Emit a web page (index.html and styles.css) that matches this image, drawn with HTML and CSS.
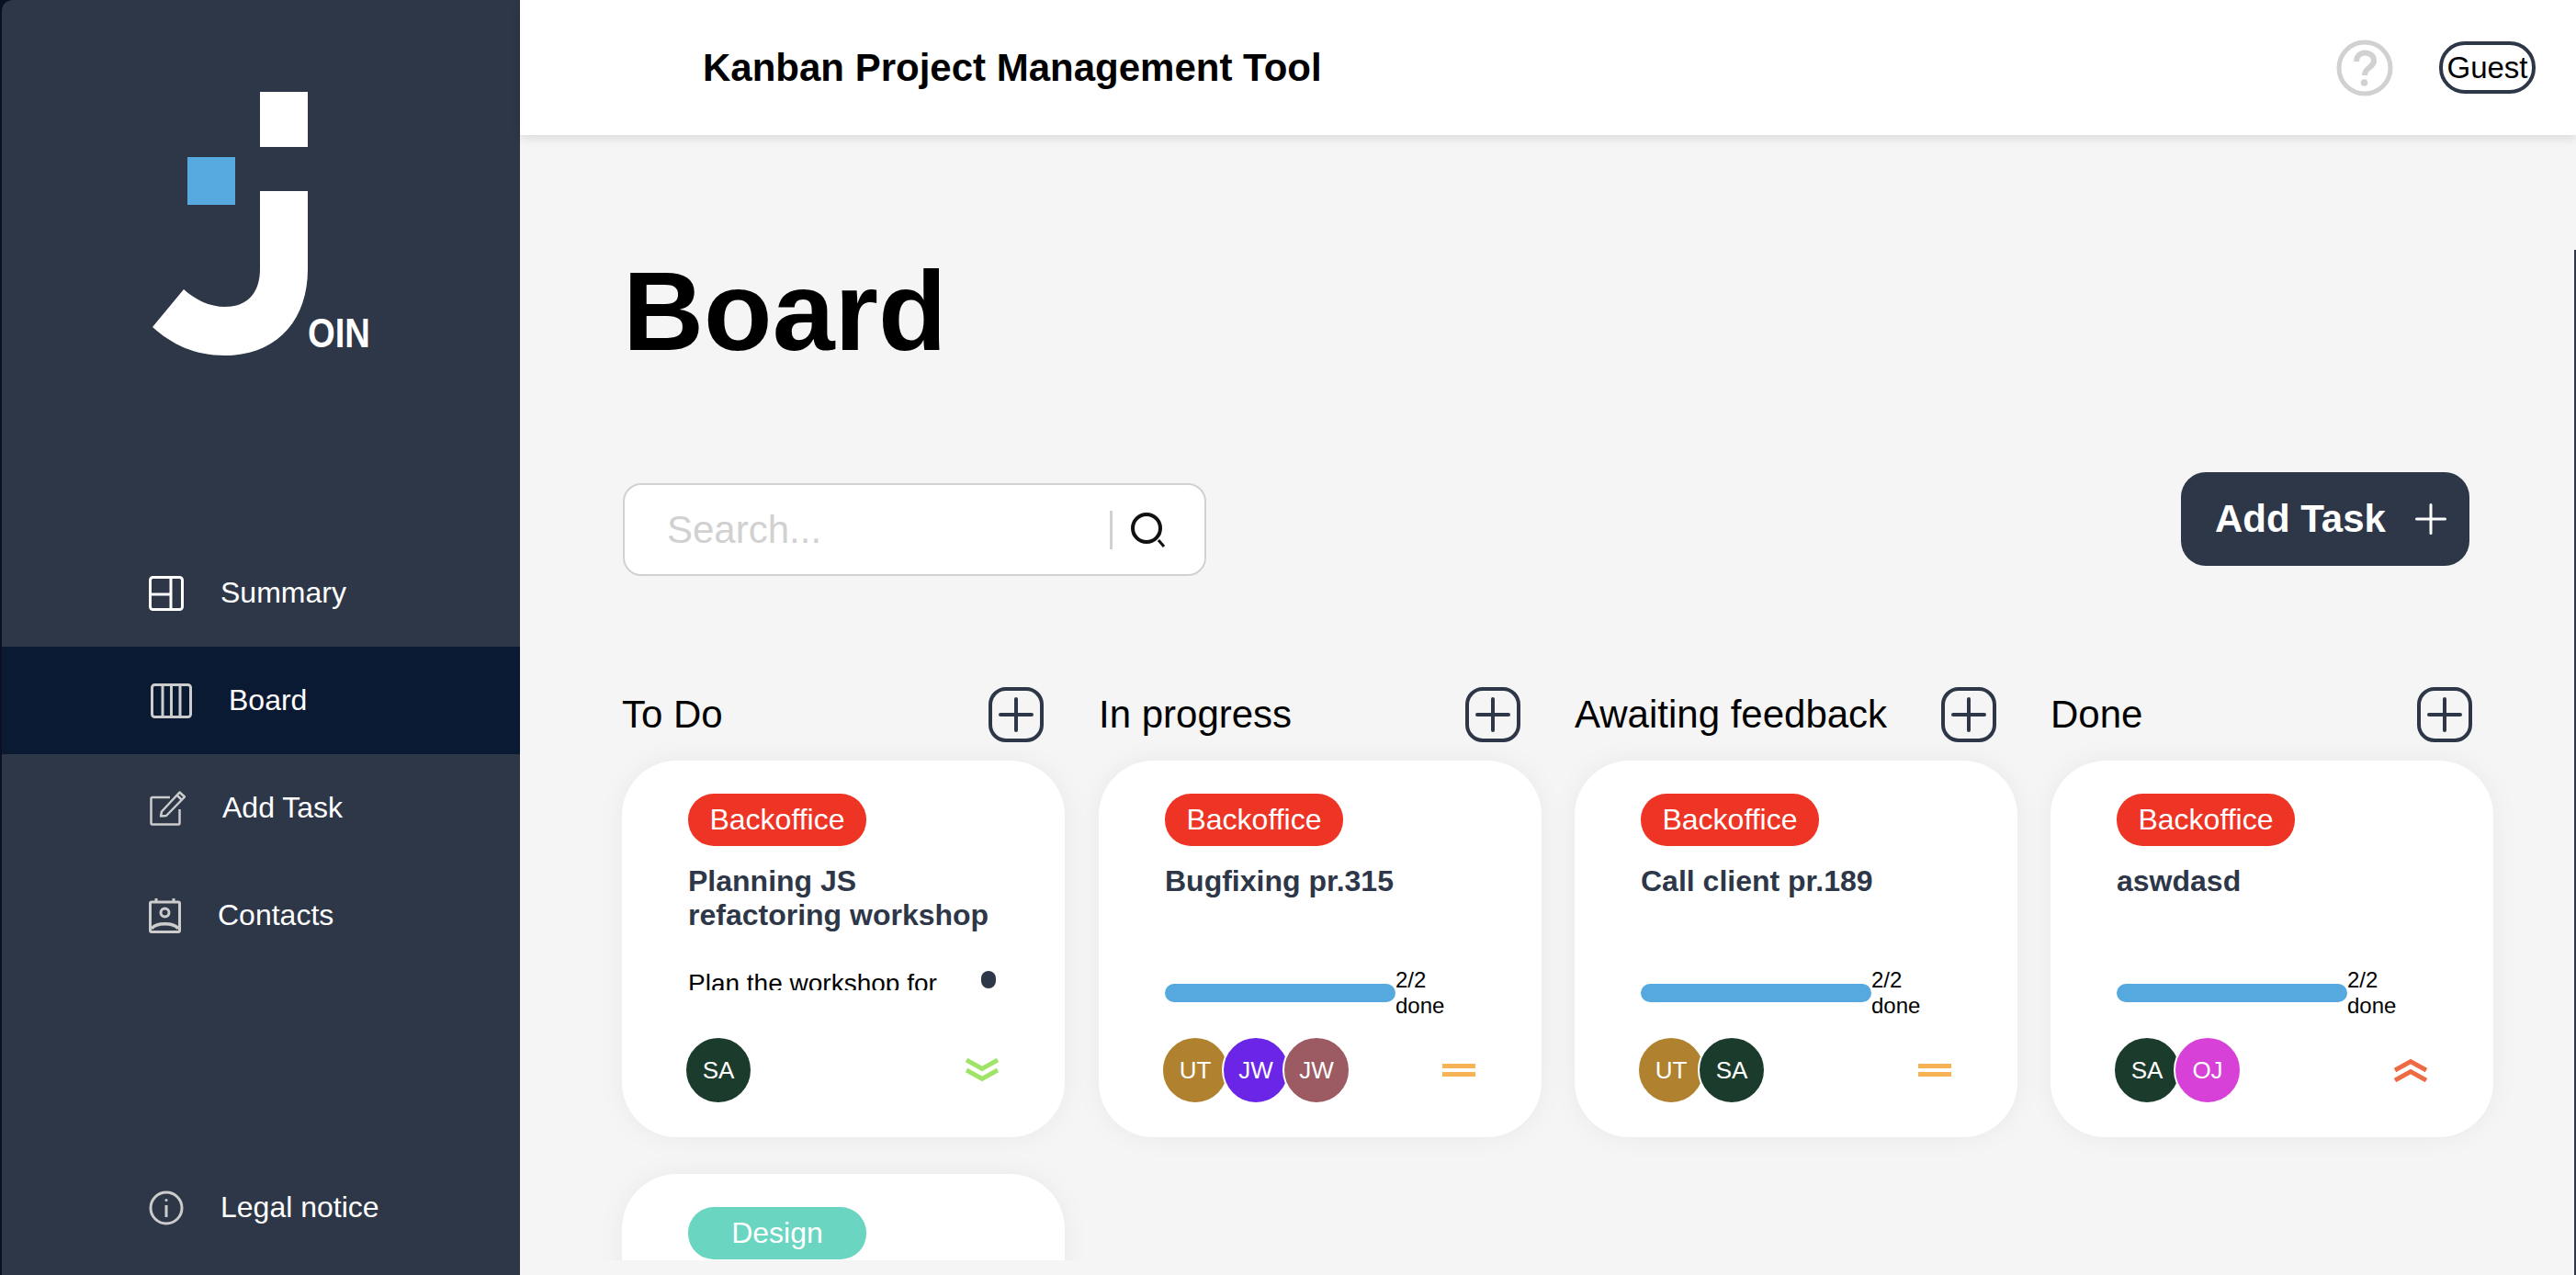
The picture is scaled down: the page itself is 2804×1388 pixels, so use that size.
FILE: index.html
```html
<!DOCTYPE html>
<html lang="en">
<head>
<meta charset="UTF-8">
<meta name="viewport" content="width=device-width, initial-scale=1.0">
<title>Join - Board</title>
<link rel="stylesheet" href="styles.css">
</head>
<body>
<aside class="sidebar">
    <svg class="logo" viewBox="160 95 250 295" width="250" height="295">
        <rect x="283" y="100" width="52" height="60" fill="#fff"/>
        <rect x="204" y="171" width="52" height="52" fill="#56a9df"/>
        <path d="M283 208H335V293C335 350 300 387 245 387C212 387 187 375 166 356L200 315C212 326 228 334 245 334C270 334 283 318 283 293Z" fill="#fff"/>
        <text class="logo-text" x="335" y="378" textLength="68" lengthAdjust="spacingAndGlyphs">OIN</text>
    </svg>
    <nav class="nav">
        <a class="nav-item">
            <svg width="38" height="38" viewBox="0 0 38 38" fill="none" stroke="#fff" stroke-width="3"><rect x="1.5" y="1.5" width="35" height="35" rx="3"/><path d="M24 2V36M2 20H24"/></svg>
            Summary
        </a>
        <a class="nav-item nav-item-board active">
            <svg width="45" height="38" viewBox="0 0 45 38" fill="none" stroke="#ccc" stroke-width="3"><rect x="1.5" y="1.5" width="42" height="35" rx="3"/><path d="M13 2V36M22.500 2V36M32 2V36"/></svg>
            Board
        </a>
        <a class="nav-item nav-item-task">
            <svg width="39" height="38" viewBox="0 0 39 38" fill="none" stroke="#ccc" stroke-width="2.500"><path d="M22 7H3A1.500 1.500 0 0 0 1.500 8.500V35A1.500 1.500 0 0 0 3 36.500H31A1.500 1.500 0 0 0 32.500 35V20"/><path d="M13 22.500L32.500 1.500L38 6.500L18 27L12 27.500Z" stroke-linejoin="round"/><path d="M29.500 4.500L35 10"/></svg>
            Add Task
        </a>
        <a class="nav-item">
            <svg width="35" height="38" viewBox="0 0 35 38" fill="none" stroke="#ccc" stroke-width="3"><rect x="1.500" y="4" width="32" height="32.500" rx="1.500"/><path d="M8 0V5M27 0V5"/><circle cx="17.500" cy="15.500" r="4.500"/><path d="M3 33C8 26 27 26 32 33" stroke-width="3.500"/></svg>
            Contacts
        </a>
    </nav>
    <a class="nav-item nav-legal">
        <svg width="38" height="38" viewBox="0 0 38 38" fill="none" stroke="#ccc" stroke-width="3"><circle cx="19" cy="19" r="17"/><path d="M19 16V29"/><circle cx="19" cy="10.500" r="1.500" fill="#ccc" stroke="none"/></svg>
        Legal notice
    </a>
</aside>

<div class="main">
    <header class="topbar">
        <div class="topbar-title">Kanban Project Management Tool</div>
        <div class="topbar-right">
            <svg width="62" height="62" viewBox="0 0 62 62" fill="none" stroke="#d1d1d1"><circle cx="31" cy="31" r="28" stroke-width="5"/><path d="M22 24C22 11 41 12 41 23C41 31 31 30 31 39" stroke-width="6"/><circle cx="30.500" cy="47" r="3.800" fill="#d1d1d1" stroke="none"/></svg>
            <div class="guest">Guest</div>
        </div>
    </header>

    <div class="content">
        <h1 class="page-title">Board</h1>
        <div class="toolbar">
            <div class="search">
                <input class="search-input" type="text" placeholder="Search...">
                <span class="search-sep"></span>
                <svg width="40" height="40" viewBox="0 0 40 40" fill="none" stroke="#111" stroke-width="4"><circle cx="18" cy="18" r="15"/><path d="M31 31L37 38" stroke-width="3"/></svg>
            </div>
            <button class="add-task">Add Task
                <svg width="34" height="34" viewBox="0 0 34 34" stroke="#fff" stroke-width="3" stroke-linecap="round"><path d="M1.500 17H32.500M17 1.500V32.500"/></svg>
            </button>
        </div>

        <div class="board">
            <section class="column">
                <div class="column-head">
                    <h2>To Do</h2>
                    <svg class="plus" width="60" height="60" viewBox="0 0 60 60" fill="none" stroke="#2d3748" stroke-width="4" stroke-linecap="round"><rect x="2" y="2" width="56" height="56" rx="17"/><path d="M13 30H47M30 13V47"/></svg>
                </div>
                <article class="card">
                    <span class="tag tag-red">Backoffice</span>
                    <h3 class="card-title">Planning JS refactoring workshop</h3>
                    <div class="card-body">
                        <div class="card-desc">Plan the workshop for the whole team
                            <span class="desc-thumb"></span>
                        </div>
                    </div>
                    <div class="card-foot">
                        <div class="avatars"><span class="avatar av-green">SA</span></div>
                        <svg width="36" height="26" viewBox="0 0 36 26" fill="none" stroke="#9fe468" stroke-width="5"><path d="M1 2L18 11.500L35 2M1 13L18 22.500L35 13"/></svg>
                    </div>
                </article>
                <article class="card">
                    <span class="tag tag-teal">Design</span>
                </article>
            </section>

            <section class="column">
                <div class="column-head">
                    <h2>In progress</h2>
                    <svg class="plus" width="60" height="60" viewBox="0 0 60 60" fill="none" stroke="#2d3748" stroke-width="4" stroke-linecap="round"><rect x="2" y="2" width="56" height="56" rx="17"/><path d="M13 30H47M30 13V47"/></svg>
                </div>
                <article class="card">
                    <span class="tag tag-red">Backoffice</span>
                    <h3 class="card-title">Bugfixing pr.315</h3>
                    <div class="card-body">
                        <div class="progress"><div class="progress-bar"></div><span class="progress-text">2/2 done</span></div>
                    </div>
                    <div class="card-foot">
                        <div class="avatars"><span class="avatar av-brown">UT</span><span class="avatar av-purple">JW</span><span class="avatar av-mauve">JW</span></div>
                        <svg width="36" height="14" viewBox="0 0 36 14" fill="none" stroke="#f6b255" stroke-width="5"><path d="M0 2.500H36M0 11.500H36"/></svg>
                    </div>
                </article>
            </section>

            <section class="column">
                <div class="column-head">
                    <h2>Awaiting feedback</h2>
                    <svg class="plus" width="60" height="60" viewBox="0 0 60 60" fill="none" stroke="#2d3748" stroke-width="4" stroke-linecap="round"><rect x="2" y="2" width="56" height="56" rx="17"/><path d="M13 30H47M30 13V47"/></svg>
                </div>
                <article class="card">
                    <span class="tag tag-red">Backoffice</span>
                    <h3 class="card-title">Call client pr.189</h3>
                    <div class="card-body">
                        <div class="progress"><div class="progress-bar"></div><span class="progress-text">2/2 done</span></div>
                    </div>
                    <div class="card-foot">
                        <div class="avatars"><span class="avatar av-brown">UT</span><span class="avatar av-green">SA</span></div>
                        <svg width="36" height="14" viewBox="0 0 36 14" fill="none" stroke="#f6b255" stroke-width="5"><path d="M0 2.500H36M0 11.500H36"/></svg>
                    </div>
                </article>
            </section>

            <section class="column">
                <div class="column-head">
                    <h2>Done</h2>
                    <svg class="plus" width="60" height="60" viewBox="0 0 60 60" fill="none" stroke="#2d3748" stroke-width="4" stroke-linecap="round"><rect x="2" y="2" width="56" height="56" rx="17"/><path d="M13 30H47M30 13V47"/></svg>
                </div>
                <article class="card">
                    <span class="tag tag-red">Backoffice</span>
                    <h3 class="card-title">aswdasd</h3>
                    <div class="card-body">
                        <div class="progress"><div class="progress-bar"></div><span class="progress-text">2/2 done</span></div>
                    </div>
                    <div class="card-foot">
                        <div class="avatars"><span class="avatar av-green">SA</span><span class="avatar av-magenta">OJ</span></div>
                        <svg width="36" height="26" viewBox="0 0 36 26" fill="none" stroke="#ee6a42" stroke-width="5"><path d="M1 13L18 3.500L35 13M1 24L18 14.500L35 24"/></svg>
                    </div>
                </article>
            </section>
        </div>
    </div>
    <span class="page-thumb"></span>
</div>
</body>
</html>
```

FILE: styles.css
```css
* {
    box-sizing: border-box;
}

body {
    margin: 0;
    height: 1388px;
    display: flex;
    overflow: hidden;
    font-family: "Liberation Sans", Arial, sans-serif;
    color: #000;
    background-color: #0a1024;
}

/* sidebar */
.sidebar {
    width: 564px;
    margin-left: 2px;
    flex-shrink: 0;
    display: flex;
    flex-direction: column;
    background-color: #2d3748;
    border-top-left-radius: 12px;
}

.logo {
    display: block;
    margin: 95px 0 0 158px;
}

.logo-text {
    font-family: "Liberation Sans Narrow", "Liberation Sans", sans-serif;
    font-size: 44px;
    font-weight: bold;
    fill: #fff;
}

.nav {
    margin-top: 197px;
    display: flex;
    flex-direction: column;
}

.nav-item {
    height: 117px;
    padding-left: 160px;
    display: flex;
    align-items: center;
    gap: 40px;
    font-size: 32px;
    color: #fff;
}

.nav-item-board {
    padding-left: 162px;
}

.nav-item-task {
    padding-left: 161px;
}

.active {
    background-color: #0b1a33;
}

.nav-legal {
    margin-top: auto;
    margin-bottom: 15px;
}

/* top bar */
.main {
    flex: 1;
    position: relative;
    display: flex;
    flex-direction: column;
    background-color: #f5f5f5;
}

.topbar {
    height: 147px;
    flex-shrink: 0;
    padding: 0 44px 0 199px;
    display: flex;
    align-items: center;
    justify-content: space-between;
    background-color: #fff;
    box-shadow: 0 4px 10px rgba(0, 0, 0, 0.1);
    position: relative;
}

.topbar-title {
    font-size: 42px;
    font-weight: bold;
}

.topbar-right {
    display: flex;
    align-items: center;
    gap: 50px;
}

.guest {
    width: 105px;
    height: 57px;
    display: flex;
    align-items: center;
    justify-content: center;
    border: 4px solid #2d3748;
    border-radius: 28px;
    font-size: 33px;
}

/* board */
.content {
    flex: 1;
    padding: 123px 116px 0 112px;
}

.page-title {
    margin: 0 0 106px;
    font-size: 122px;
    line-height: 138px;
    font-weight: bold;
}

.toolbar {
    display: flex;
    justify-content: space-between;
    align-items: flex-start;
}

.search {
    width: 635px;
    height: 101px;
    margin-top: 12px;
    padding: 0 41px 0 46px;
    display: flex;
    align-items: center;
    gap: 19px;
    background-color: #fff;
    border: 2px solid #d1d1d1;
    border-radius: 20px;
}

.search-input {
    flex: 1;
    min-width: 0;
    border: none;
    outline: none;
    padding: 0;
    font-family: inherit;
    font-size: 42px;
}

.search-input::placeholder {
    color: #d1d1d1;
}

.search-sep {
    width: 3px;
    height: 42px;
    background-color: #d1d1d1;
}

.add-task {
    width: 314px;
    height: 102px;
    padding: 0 25px 0 37px;
    display: flex;
    align-items: center;
    justify-content: space-between;
    border: none;
    border-radius: 27px;
    background-color: #2d3748;
    color: #fff;
    font-family: inherit;
    font-size: 42px;
    font-weight: bold;
}

.board {
    height: 624px;
    margin: 121px -116px 0 -30px;
    padding-left: 30px;
    display: flex;
    gap: 36px;
    overflow: hidden;
}

.column {
    width: 482px;
    flex-shrink: 0;
}

.column:first-child {
    margin: 0 1px 0 -1px;
}

.column-head {
    width: 459px;
    height: 60px;
    margin-bottom: 20px;
    display: flex;
    align-items: center;
    justify-content: space-between;
}

.column-head h2 {
    margin: 0;
    font-size: 42px;
    font-weight: normal;
}

.card {
    height: 410px;
    margin-bottom: 40px;
    padding: 36px 72px 0;
    background-color: #fff;
    border-radius: 60px;
    box-shadow: 0 0 30px rgba(0, 0, 0, 0.05);
}

.tag {
    display: block;
    width: 194px;
    height: 57px;
    line-height: 57px;
    text-align: center;
    border-radius: 28px;
    font-size: 32px;
    color: #fff;
}

.tag-red {
    background-color: #ee3425;
}

.tag-teal {
    background-color: #6ad5c1;
}

.card-title {
    height: 74px;
    margin: 20px 0 37px;
    font-size: 32px;
    line-height: 37px;
    font-weight: bold;
    color: #2d3748;
}

.card-body {
    height: 58px;
}

.card-desc {
    position: relative;
    width: 337px;
    height: 23px;
    padding-right: 60px;
    overflow: hidden;
    font-size: 28px;
    line-height: 32px;
    transform: translateY(3px);
}

.desc-thumb {
    position: absolute;
    right: 2px;
    top: 2px;
    width: 16px;
    height: 19px;
    border-radius: 8px;
    background-color: #2d3748;
}

.progress {
    height: 100%;
    display: flex;
    align-items: center;
}

.progress-bar {
    width: 251px;
    height: 20px;
    border-radius: 10px;
    background-color: #56a9df;
}

.progress-text {
    width: 60px;
    font-size: 24px;
    line-height: 28px;
}

.card-foot {
    margin: 18px 0 0 -4px;
    display: flex;
    align-items: center;
    justify-content: space-between;
}

.avatars {
    display: flex;
}

.avatar {
    width: 74px;
    height: 74px;
    display: flex;
    align-items: center;
    justify-content: center;
    border: 2px solid #fff;
    border-radius: 50%;
    font-size: 26px;
    color: #fff;
}

.avatar + .avatar {
    margin-left: -8px;
}

.av-green {
    background-color: #1b3c2c;
}

.av-brown {
    background-color: #b08230;
}

.av-purple {
    background-color: #6a25e6;
}

.av-mauve {
    background-color: #9c5a62;
}

.av-magenta {
    background-color: #d741d8;
}

.page-thumb {
    position: absolute;
    top: 272px;
    right: 0;
    bottom: 0;
    width: 2px;
    background-color: #2d3748;
}
```
